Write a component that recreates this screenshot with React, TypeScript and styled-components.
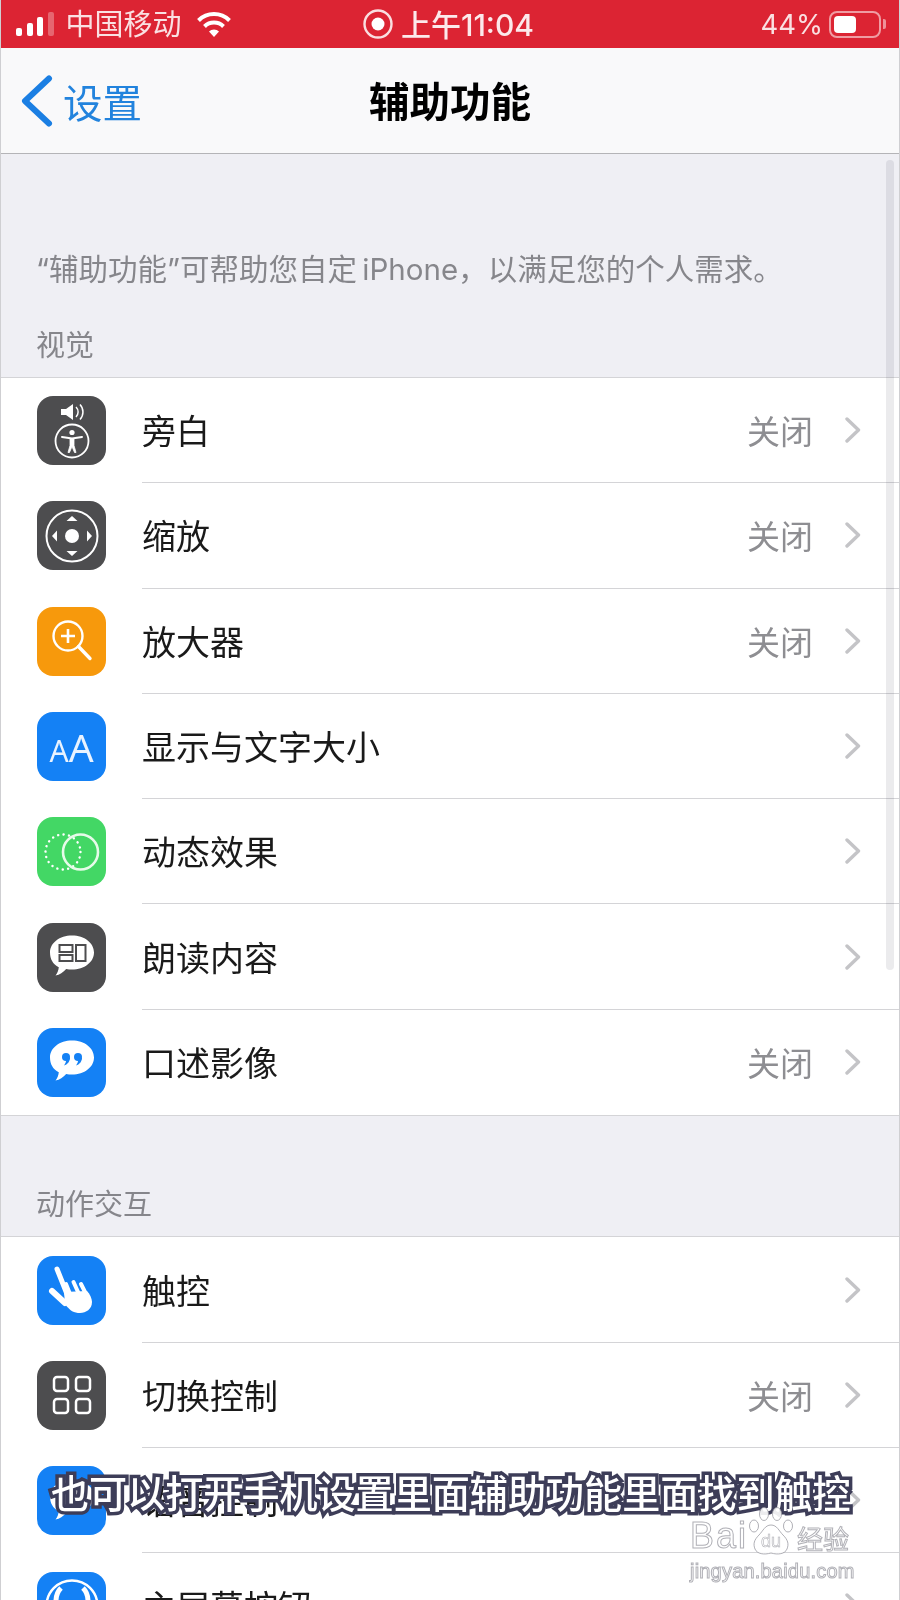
import React from "react";
import styled, { createGlobalStyle } from "styled-components";

const SANS = `Inter, "Noto Sans CJK SC", sans-serif`;
const CJK = `"Noto Sans CJK SC", sans-serif`;

const GlobalStyle = createGlobalStyle`
  html, body {
    margin: 0;
    padding: 0;
    background: #fff;
  }
`;

const Screen = styled.div`
  position: relative;
  width: 900px;
  height: 1600px;
  box-sizing: border-box;
  overflow: hidden;
  background: #efeff4;
  font-family: ${CJK};
  border-left: 1px solid #cfcfd2;
  border-right: 1px solid #cfcfd2;
  filter: blur(0.5px);
`;

const StatusBar = styled.div`
  height: 48px;
  margin: 0 -1px;
  padding: 0 13px 0 16px;
  box-sizing: border-box;
  display: grid;
  grid-template-columns: 1fr auto 1fr;
  align-items: center;
  background: #dc2433;
  color: rgba(255, 255, 255, 0.86);
  font-family: ${SANS};
  font-size: 29px;
`;

const StatusLeft = styled.div`
  display: flex;
  align-items: center;
`;

const StatusCenter = styled.div`
  display: flex;
  align-items: center;
  gap: 8px;
  margin-right: 6px;
  font-size: 30px;
  font-weight: 500;
  color: rgba(255, 255, 255, 0.9);
`;

const StatusTime = styled.span`
  margin-bottom: 3px;
`;

const StatusRight = styled.div`
  display: flex;
  align-items: center;
  justify-content: flex-end;
  gap: 6px;
  font-size: 27.5px;
`;

const Signal = styled.div`
  display: flex;
  align-items: flex-end;
  gap: 4.5px;
  height: 24px;
  margin-right: 12px;
`;

const SignalBar = styled.div<{ $h: number; $off?: boolean }>`
  width: 6px;
  height: ${(p) => p.$h}px;
  border-radius: 2px;
  background: ${(p) => (p.$off ? "rgba(255,255,255,0.3)" : "#fff")};
`;

const Carrier = styled.span`
  line-height: 47px;
  margin-right: 14px;
`;

const Battery = styled.div`
  position: relative;
  width: 52px;
  height: 27px;
  box-sizing: border-box;
  border: 2px solid rgba(255, 255, 255, 0.55);
  border-radius: 8px;
  margin-right: 6px;
  padding: 3px;

  &::after {
    content: "";
    position: absolute;
    right: -7px;
    top: 6px;
    width: 3px;
    height: 10px;
    border-radius: 0 2px 2px 0;
    background: rgba(255, 255, 255, 0.5);
  }
`;

const BatteryFill = styled.div`
  width: 22px;
  height: 100%;
  border-radius: 4px;
  background: #fff;
`;

const NavBar = styled.div`
  height: 106px;
  box-sizing: border-box;
  display: grid;
  grid-template-columns: 1fr auto 1fr;
  align-items: center;
  background: #f9f9fa;
  border-bottom: 1px solid #b4b4b7;
`;

const BackLink = styled.div`
  display: flex;
  align-items: center;
  gap: 9px;
  padding-left: 19px;
  color: #2283dd;
  font-size: 39.5px;
  line-height: 50px;
`;

const NavTitle = styled.div`
  color: #000;
  font-size: 40.5px;
  font-weight: 700;
  line-height: 48px;
  margin-bottom: 2px;
`;

const Intro = styled.p`
  margin: 0;
  padding: 95px 35px 0;
  color: #86868b;
  font-family: ${SANS};
  font-size: 29.5px;
  line-height: 40px;
  white-space: nowrap;
`;

const SectionHead = styled.div<{ $top: number }>`
  padding: ${(p) => p.$top}px 35px 14px;
  color: #86868b;
  font-size: 29px;
  line-height: 40px;
`;

const List = styled.div`
  background: #fff;
  border-top: 1px solid #d4d4d7;
  border-bottom: 1px solid #d4d4d7;
`;

const RowWrap = styled.div`
  height: 105.3px;
  box-sizing: border-box;
  display: flex;
  align-items: center;
  padding-left: 36px;
`;

const Tile = styled.div<{ $bg: string }>`
  flex: none;
  position: relative;
  width: 69px;
  height: 69px;
  border-radius: 16px;
  background: ${(p) => p.$bg};
  display: flex;
  align-items: center;
  justify-content: center;
  color: #fff;

  svg {
    display: block;
    flex: none;
  }
`;

const AaLabel = styled.div`
  display: flex;
  align-items: baseline;
  gap: 0;
  color: #e9f3ff;
  font-family: "Noto Sans", sans-serif;
  line-height: 1;
`;

const AaLetter = styled.span<{ $size: number }>`
  font-size: ${(p) => p.$size}px;
`;

const RowBody = styled.div<{ $last?: boolean }>`
  flex: 1;
  align-self: stretch;
  display: flex;
  align-items: center;
  margin-left: 36px;
  padding: 0 38px 0 0;
  border-bottom: ${(p) => (p.$last ? "none" : "1px solid #d4d4d7")};
`;

const RowLabel = styled.div`
  flex: 1;
  color: #1a1a1a;
  font-size: 34px;
  line-height: 44px;
`;

const RowValue = styled.div`
  color: #8e8e92;
  font-size: 33px;
  line-height: 44px;
  margin-right: 32px;
`;

const ScrollThumb = styled.div`
  position: absolute;
  left: 885px;
  top: 160px;
  width: 8px;
  height: 810px;
  border-radius: 4px;
  background: rgba(60, 60, 80, 0.1);
`;

const Subtitle = styled.div`
  position: absolute;
  left: 50px;
  top: 1467px;
  color: #fff;
  font-size: 38.1px;
  font-weight: 500;
  line-height: 50px;
  white-space: nowrap;
  -webkit-text-stroke: 7px #3d3d58;
  paint-order: stroke fill;
`;

const Watermark = styled.div`
  position: absolute;
  left: 689px;
  top: 1506px;
  width: 170px;
  color: rgba(255, 255, 255, 0.9);
  -webkit-text-stroke: 1px rgba(150, 150, 158, 0.75);
`;

const WatermarkTop = styled.div`
  display: flex;
  align-items: flex-end;
  height: 50px;
`;

const WatermarkWord = styled.span`
  font-family: "Liberation Sans", sans-serif;
  font-size: 36px;
  line-height: 40px;
  letter-spacing: 2px;
`;

const WatermarkCn = styled.span`
  font-size: 26px;
  line-height: 36px;
  margin-left: 3px;
`;

const WatermarkUrl = styled.div`
  font-family: "Liberation Sans", sans-serif;
  font-size: 20px;
  line-height: 26px;
  margin-top: 2px;
  letter-spacing: 0.2px;
`;

const Chevron = () => (
  <svg width="16" height="26" viewBox="0 0 16 26" fill="none">
    <path d="M2 2l11.5 11L2 24" stroke="#c4c4c7" strokeWidth="3.4" strokeLinecap="round" strokeLinejoin="round" />
  </svg>
);

const BackChevron = () => (
  <svg width="34" height="52" viewBox="0 0 34 52" fill="none">
    <path d="M29 3.500L5 26l24 22.500" stroke="#1b7fe3" strokeWidth="6" strokeLinecap="round" strokeLinejoin="round" />
  </svg>
);

const Wifi = () => (
  <svg width="36" height="27" viewBox="0 0 36 27" fill="none">
    <path d="M2.500 9.500a22 22 0 0 1 31 0" stroke="#fff" strokeWidth="4" />
    <path d="M8.500 15.500a13.500 13.500 0 0 1 19 0" stroke="#fff" strokeWidth="4" />
    <path d="M13 20.500a7 7 0 0 1 10 0L18 26z" fill="#fff" />
  </svg>
);

const RecordDot = () => (
  <svg width="30" height="30" viewBox="0 0 30 30" fill="none">
    <circle cx="15" cy="15" r="13.500" stroke="#fff" strokeWidth="2.400" opacity="0.85" />
    <circle cx="15" cy="15" r="6.500" fill="#fff" />
  </svg>
);

const VoiceOverIcon = () => (
  <svg width="70" height="70" viewBox="0 0 70 70" fill="none">
    <path d="M24 13h5l7-5v16l-7-5h-5z" fill="#fff" />
    <path d="M39 11a7 7 0 0 1 0 10M43 8.500a11 11 0 0 1 0 15" stroke="#fff" strokeWidth="1.500" />
    <circle cx="35" cy="45" r="16.500" stroke="#fff" strokeWidth="1.800" />
    <circle cx="35" cy="36.500" r="2.600" fill="#fff" />
    <path d="M25 41l10 1.500 10-1.500" stroke="#fff" strokeWidth="2" strokeLinecap="round" />
    <path d="M33 42.500h4v7l2 7h-1.500L35 50.500 32.500 56.500H31l2-7z" fill="#fff" stroke="#fff" strokeWidth="0.800" strokeLinejoin="round" />
  </svg>
);

const ZoomIcon = () => (
  <svg width="70" height="70" viewBox="0 0 70 70" fill="none">
    <circle cx="35" cy="35" r="25.500" stroke="#fff" strokeWidth="2" />
    <circle cx="35" cy="35" r="7" fill="#fff" />
    <path d="M35 15l5.500 5h-11zM35 55l5.500-5h-11zM15 35l5-5.500v11zM55 35l-5-5.500v11z" fill="#fff" />
  </svg>
);

const MagnifierIcon = () => (
  <svg width="70" height="70" viewBox="0 0 70 70" fill="none">
    <circle cx="31" cy="30" r="14.500" stroke="#fff" strokeWidth="2.400" />
    <path d="M24 30h14M31 23v14" stroke="#fff" strokeWidth="2.600" />
    <path d="M41.500 40.500L53 52.500" stroke="#fff" strokeWidth="3.400" strokeLinecap="round" />
  </svg>
);

const MotionIcon = () => (
  <svg width="70" height="70" viewBox="0 0 70 70" fill="none">
    <circle cx="26" cy="35" r="17.500" stroke="#fff" strokeWidth="2.400" strokeDasharray="0.1 5.400" strokeLinecap="round" />
    <circle cx="43.500" cy="35" r="17.500" stroke="#e6fbe9" strokeWidth="2.600" />
  </svg>
);

const BUBBLE =
  "M35 13.500c12.500 0 22 7.500 22 17s-9.500 17-22 17c-2 0-4-.2-5.800-.6-3 3-6.500 5.800-10.700 6.600 1.800-2.500 3-5 3.300-8.300C15.700 42.200 13 36.800 13 30.500c0-9.500 9.500-17 22-17z";

const SpeakIcon = () => (
  <svg width="70" height="70" viewBox="0 0 70 70" fill="none">
    <path d={BUBBLE} fill="#fff" />
    <rect x="22.500" y="23" width="13" height="7" stroke="#4d4d4f" strokeWidth="2" />
    <rect x="22.500" y="33" width="13" height="6" stroke="#4d4d4f" strokeWidth="2" />
    <rect x="39" y="23" width="9.500" height="16" stroke="#4d4d4f" strokeWidth="2" />
  </svg>
);

const QuoteIcon = () => (
  <svg width="70" height="70" viewBox="0 0 70 70" fill="none">
    <path d={BUBBLE} fill="#fff" />
    <circle cx="29" cy="30" r="4" fill="#1481f5" />
    <path d="M33 30.500c0 4-2.500 7-6 8 1.500-2 2-3.500 2-5z" fill="#1481f5" />
    <circle cx="41" cy="30" r="4" fill="#1481f5" />
    <path d="M45 30.500c0 4-2.500 7-6 8 1.500-2 2-3.500 2-5z" fill="#1481f5" />
  </svg>
);

const TouchIcon = () => (
  <svg width="70" height="70" viewBox="0 0 70 70" fill="none">
    <path d="M20 14l10 25" stroke="#fff" strokeWidth="5" strokeLinecap="round" />
    <path d="M15 36l13 12" stroke="#fff" strokeWidth="6" strokeLinecap="round" />
    <path d="M29 29l4 10M36.500 27l5 11M44 29l5 10" stroke="#fff" strokeWidth="4" strokeLinecap="round" />
    <path d="M27 37l23-1c3 3 5 8 5 11 0 7-6 11-12 11-6 0-10-2-15-9z" fill="#fff" />
  </svg>
);

const SwitchIcon = () => (
  <svg width="70" height="70" viewBox="0 0 70 70" fill="none" stroke="#fff" strokeWidth="2.500">
    <rect x="17" y="17" width="14" height="14" rx="3" />
    <rect x="39" y="17" width="14" height="14" rx="3" />
    <rect x="17" y="39" width="14" height="14" rx="3" />
    <rect x="39" y="39" width="14" height="14" rx="3" />
  </svg>
);

const VoiceControlIcon = () => (
  <svg width="70" height="70" viewBox="0 0 70 70" fill="none">
    <path d={BUBBLE} fill="#fff" />
  </svg>
);

const HomeIcon = () => (
  <svg width="70" height="70" viewBox="0 0 70 70" fill="none">
    <circle cx="35" cy="35" r="25.500" stroke="#fff" strokeWidth="2.500" />
    <path d="M19 30c0-6 2-10 5-13M51 30c0-6-2-10-5-13" stroke="#fff" strokeWidth="5" />
    <path d="M19 30v16M51 30v16" stroke="#fff" strokeWidth="5" />
  </svg>
);

const PawMark = () => (
  <svg
    width="46"
    height="50"
    viewBox="0 0 46 50"
    stroke="rgba(150,150,158,0.75)"
    strokeWidth="1"
    fill="rgba(255,255,255,0.9)"
  >
    <ellipse cx="6" cy="20" rx="4.500" ry="6" />
    <ellipse cx="16" cy="8" rx="4.500" ry="6.500" />
    <ellipse cx="29" cy="8" rx="4.500" ry="6.500" />
    <ellipse cx="40" cy="20" rx="4.500" ry="6" />
    <path d="M23 19c6 0 8 6 12 10 5 5 6 9 4 14-2 5-9 6-16 4-7 2-14 1-16-4-2-5-1-9 4-14 4-4 6-10 12-10z" />
    <text x="23" y="41" textAnchor="middle" fontFamily="Liberation Sans, sans-serif" fontSize="18" strokeWidth="0.6">
      du
    </text>
  </svg>
);

type RowProps = {
  label: string;
  bg: string;
  icon: React.ReactNode;
  value?: string;
  last?: boolean;
};

const Row = ({ label, bg, icon, value, last }: RowProps) => (
  <RowWrap>
    <Tile $bg={bg}>{icon}</Tile>
    <RowBody $last={last}>
      <RowLabel>{label}</RowLabel>
      {value && <RowValue>{value}</RowValue>}
      <Chevron />
    </RowBody>
  </RowWrap>
);

const DARK = "#4d4d4f";
const BLUE = "#1481f5";

export default function App() {
  return (
    <Screen>
      <GlobalStyle />
      <StatusBar>
        <StatusLeft>
          <Signal>
            <SignalBar $h={8} />
            <SignalBar $h={13} />
            <SignalBar $h={19} />
            <SignalBar $h={24} $off />
          </Signal>
          <Carrier>中国移动</Carrier>
          <Wifi />
        </StatusLeft>
        <StatusCenter>
          <RecordDot />
          <StatusTime>上午11:04</StatusTime>
        </StatusCenter>
        <StatusRight>
          <span>44%</span>
          <Battery>
            <BatteryFill />
          </Battery>
        </StatusRight>
      </StatusBar>

      <NavBar>
        <BackLink>
          <BackChevron />
          <span>设置</span>
        </BackLink>
        <NavTitle>辅助功能</NavTitle>
      </NavBar>

      <Intro>“辅助功能”可帮助您自定{"\u2009"}iPhone{"\uFF0C"}以满足您的个人需求。</Intro>
      <SectionHead $top={34}>视觉</SectionHead>
      <List>
        <Row label="旁白" bg={DARK} icon={<VoiceOverIcon />} value="关闭" />
        <Row label="缩放" bg={DARK} icon={<ZoomIcon />} value="关闭" />
        <Row label="放大器" bg="#f7990c" icon={<MagnifierIcon />} value="关闭" />
        <Row
          label="显示与文字大小"
          bg={BLUE}
          icon={
            <AaLabel>
              <AaLetter $size={30}>A</AaLetter>
              <AaLetter $size={39}>A</AaLetter>
            </AaLabel>
          }
        />
        <Row label="动态效果" bg="#43d765" icon={<MotionIcon />} />
        <Row label="朗读内容" bg={DARK} icon={<SpeakIcon />} />
        <Row label="口述影像" bg={BLUE} icon={<QuoteIcon />} value="关闭" last />
      </List>

      <SectionHead $top={66.4}>动作交互</SectionHead>
      <List>
        <Row label="触控" bg={BLUE} icon={<TouchIcon />} />
        <Row label="切换控制" bg={DARK} icon={<SwitchIcon />} value="关闭" />
        <Row label="语音控制" bg={BLUE} icon={<VoiceControlIcon />} />
        <Row label="主屏幕按钮" bg={BLUE} icon={<HomeIcon />} />
      </List>

      <ScrollThumb />
      <Subtitle>也可以打开手机设置里面辅助功能里面找到触控</Subtitle>
      <Watermark>
        <WatermarkTop>
          <WatermarkWord>Bai</WatermarkWord>
          <PawMark />
          <WatermarkCn>经验</WatermarkCn>
        </WatermarkTop>
        <WatermarkUrl>jingyan.baidu.com</WatermarkUrl>
      </Watermark>
    </Screen>
  );
}
